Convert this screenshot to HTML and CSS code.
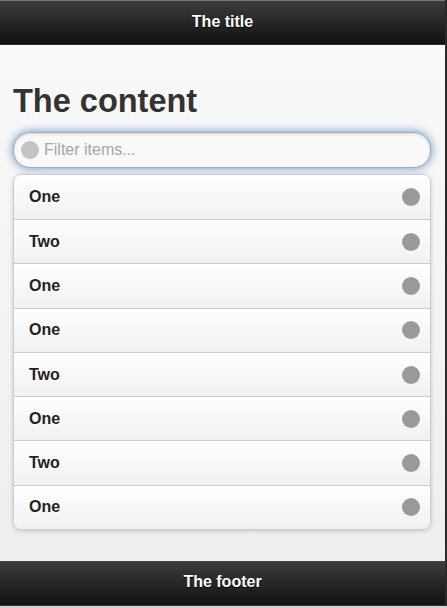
FILE: index.html
```html
<!DOCTYPE html>
<html lang="en">
<head>
    <meta charset="UTF-8">
    <meta name="viewport" content="width=device-width, initial-scale=1.0">
    <title>The title</title>
    <link rel="stylesheet" href="styles.css">
</head>
<body>

    <div class="page">
        <!-- Header -->
        <div class="header">
            <h1>The title</h1>
        </div>

        <div class="content">
            <h1>The content</h1>

            <div class="search">
                <span class="search-icon"></span>
                <input type="text" placeholder="Filter items...">
            </div>

            <ul class="listview">
                <li>One<span class="dot"></span></li>
                <li>Two<span class="dot"></span></li>
                <li>One<span class="dot"></span></li>
                <li>One<span class="dot"></span></li>
                <li>Two<span class="dot"></span></li>
                <li>One<span class="dot"></span></li>
                <li>Two<span class="dot"></span></li>
                <li>One<span class="dot"></span></li>
            </ul>
        </div>

        <!-- Footer -->
        <div class="footer">
            <h4>The footer</h4>
        </div>
    </div>

</body>
</html>
```

FILE: styles.css
```css
/* Global Styles */
html {
    background-color: #d4d4d4;
}

body {
    font-family: "Liberation Sans", Arial, sans-serif;
    margin: 0;
    height: 608px;
    overflow: hidden;
}

.page {
    width: 445px;
    height: 606px;
    border-right: 2px solid #2a2a2a;
    display: flex;
    flex-direction: column;
}

/* Header & Footer */
.header,
.footer {
    background: linear-gradient(#3c3c3c, #111);
    color: #fff;
    text-align: center;
    border-top: 1px solid #777;
    border-bottom: 1px solid #333;
}

.header {
    height: 43px;
}

.footer {
    height: 43px;
    border-top: 1px solid #444;
}

.header h1,
.footer h4 {
    margin: 0;
    font-size: 16px;
    font-weight: bold;
    line-height: 42px;
    text-shadow: 0 1px 0 #000;
}

.footer h4 {
    line-height: 40px;
}

/* Content */
.content {
    flex: 1;
    background: linear-gradient(#f9f9f9, #eee);
    padding: 37px 14px 0 13px;
}

.content h1 {
    margin: 0 0 12px;
    font-size: 32.5px;
    line-height: 38px;
    color: #333;
    text-shadow: 0 1px 0 #fff;
}

/* Filter */
.search {
    display: flex;
    align-items: center;
    height: 34px;
    border: 1px solid #aaa;
    border-radius: 17px;
    background-color: #f9f9f9;
    box-shadow: 0 0 10px #5a8fc8, inset 0 1px 3px rgba(0, 0, 0, 0.15);
    padding-left: 7px;
}

.search-icon {
    width: 18px;
    height: 18px;
    border-radius: 50%;
    background-color: #c3c3c3;
    margin-right: 5px;
}

.search input {
    flex: 1;
    border: none;
    background: transparent;
    font-family: inherit;
    font-size: 16px;
    color: #333;
    outline: none;
    padding: 0;
}

.search input::placeholder {
    color: #a6a6a6;
}

/* List */
.listview {
    list-style: none;
    margin: 6px 0 0;
    padding: 0;
    border: 1px solid #ccc;
    border-radius: 8px;
    overflow: hidden;
    box-shadow: 0 1px 4px rgba(0, 0, 0, 0.18);
}

.listview li {
    display: flex;
    justify-content: space-between;
    align-items: center;
    height: 43.3px;
    padding: 0 10px 0 15px;
    font-size: 16px;
    font-weight: bold;
    color: #222;
    text-shadow: 0 1px 0 #fff;
    background: linear-gradient(#fff, #f1f1f1);
    border-top: 1px solid #ccc;
}

.listview li:first-child {
    border-top: none;
    height: 44px;
}

.dot {
    width: 18px;
    height: 18px;
    border-radius: 50%;
    background-color: #999;
}
```
